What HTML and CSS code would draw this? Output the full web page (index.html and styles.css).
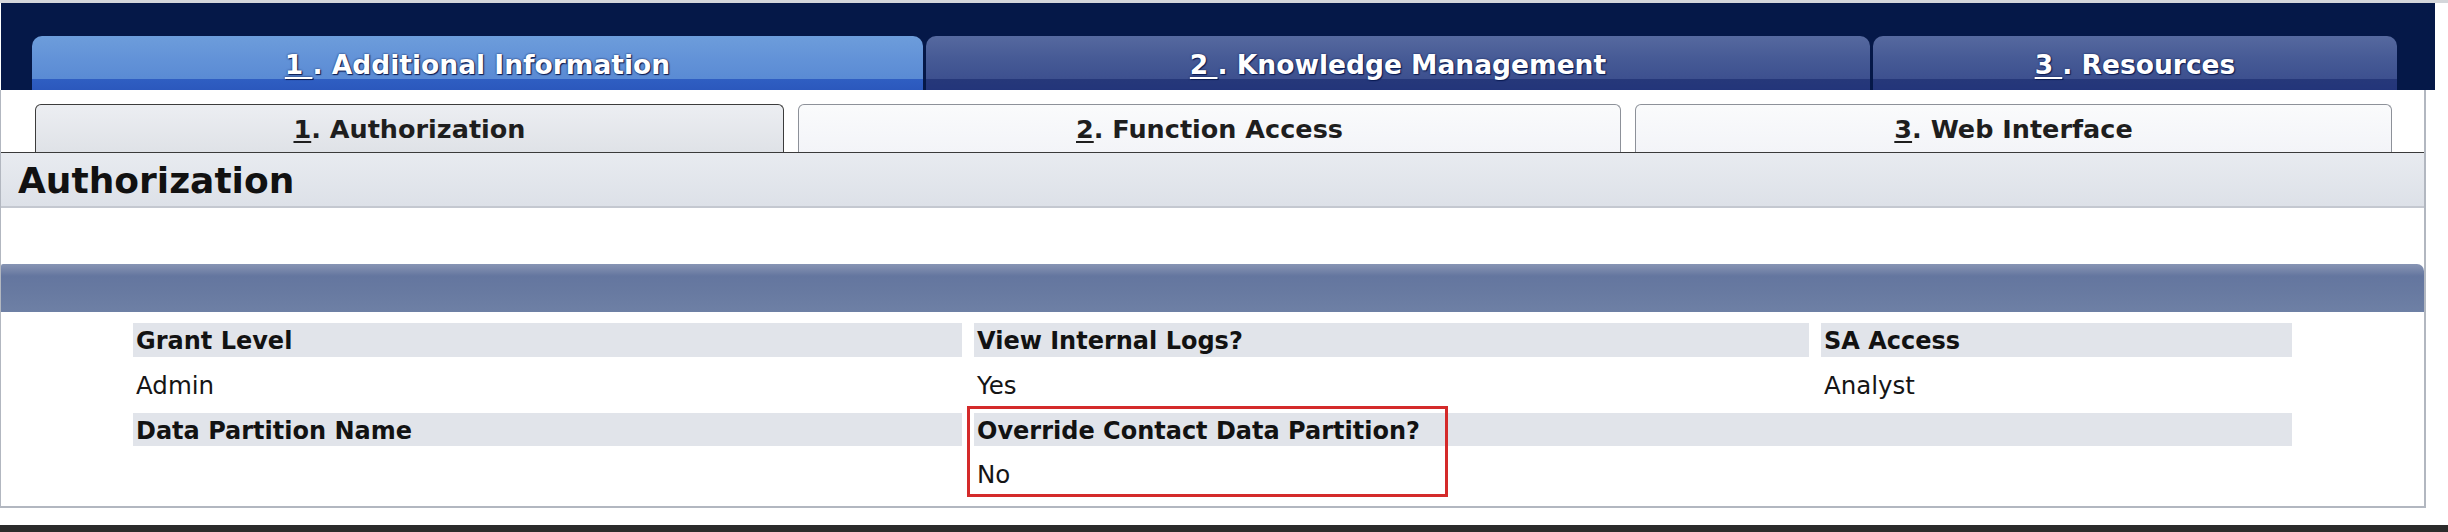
FILE: index.html
```html
<!DOCTYPE html>
<html>
<head>
<meta charset="utf-8">
<title>Authorization</title>
<link rel="stylesheet" href="styles.css">
</head>
<body>
<div class="screen">
  <div class="topnav">
    <div class="maintab active"><span class="u">1 </span>. Additional Information</div>
    <div class="maintab"><span class="u">2 </span>. Knowledge Management</div>
    <div class="maintab last"><span class="u">3 </span>. Resources</div>
  </div>
  <div class="panel">
    <div class="subtabs">
      <div class="subtab active s1"><span class="u">1</span>. Authorization</div>
      <div class="subtab s2"><span class="u">2</span>. Function Access</div>
      <div class="subtab s3"><span class="u">3</span>. Web Interface</div>
    </div>
    <div class="pagehead">Authorization</div>
    <div class="sectionbar"></div>
    <div class="fields">
      <div class="label">Grant Level</div>
      <div class="label">View Internal Logs?</div>
      <div class="label">SA Access</div>
      <div class="value">Admin</div>
      <div class="value">Yes</div>
      <div class="value">Analyst</div>
      <div class="label">Data Partition Name</div>
      <div class="label wide">Override Contact Data Partition?</div>
      <div class="value"></div>
      <div class="value">No</div>
      <div class="value"></div>
      <div class="highlight"></div>
    </div>
  </div>
  <div class="footer"></div>
</div>
</body>
</html>
```

FILE: styles.css
```css
* { box-sizing: border-box; margin: 0; padding: 0; }
html, body { width: 2448px; height: 532px; overflow: hidden; background: #ffffff; }
body { font-family: "DejaVu Sans", Verdana, sans-serif; color: #111111; }

.screen {
  width: 2448px;
  height: 532px;
  display: flex;
  flex-direction: column;
  border-top: 3px solid #d4d6da;
}

.u { text-decoration: underline; text-underline-offset: 3px; text-decoration-thickness: 2px; }

/* main tabs */
.topnav {
  width: 2434px;
  height: 87px;
  margin-left: 1px;
  background: #051848;
  padding: 33px 0 0 31px;
  display: flex;
  gap: 3px;
  flex-shrink: 0;
}
.maintab {
  width: 944px;
  height: 54px;
  border-radius: 10px 10px 0 0;
  color: #ffffff;
  font-weight: bold;
  font-size: 26.5px;
  padding-top: 3px;
  display: flex;
  align-items: center;
  justify-content: center;
  white-space: pre;
  text-shadow: 0 0 2px #0a1b52, 1px 1px 1px #0a1b52;
  background: linear-gradient(#56699f 0%, #475b96 40%, #3d508f 79%, #26387a 80%, #23357a 100%);
}
.maintab.active {
  width: 891px;
  background: linear-gradient(#6d9ddb 0%, #6393d8 40%, #5a8bd4 79%, #2f5ec2 80%, #2b58bd 100%);
}
.maintab.last { width: 524px; }

/* panel */
.panel {
  width: 2426px;
  height: 418px;
  border-left: 1px solid #b2b7c0;
  border-right: 2px solid #b2b7c0;
  border-bottom: 2px solid #b2b7c0;
  flex-shrink: 0;
}

.subtabs {
  height: 63px;
  padding: 14px 0 0 34px;
  display: flex;
  gap: 14px;
  border-bottom: 1px solid #3a3a3a;
}
.subtab {
  height: 48px;
  border: 1px solid #8d9199;
  border-bottom: none;
  border-radius: 6px 6px 0 0;
  background: linear-gradient(#fafbfc, #f3f4f8);
  display: flex;
  align-items: center;
  justify-content: center;
  font-size: 25.5px;
  font-weight: bold;
  color: #1e1e1e;
}
.subtab.active {
  border-color: #3c3c3c;
  background: linear-gradient(#eceef2, #dfe2e7);
}
.s1 { width: 749px; }
.s2 { width: 823px; }
.s3 { width: 757px; }

.pagehead {
  height: 55px;
  padding: 2px 0 0 17px;
  line-height: 51px;
  font-size: 36px;
  font-weight: bold;
  color: #111111;
  background: linear-gradient(#e8ebf0, #dde1e8);
  border-bottom: 2px solid #c4c8d0;
}

.sectionbar {
  margin-top: 56px;
  height: 48px;
  border-radius: 2px 7px 0 0;
  background: linear-gradient(#8795b4 0px, #7d8bad 4px, #64769f 12px, #687aa1 60%, #6e80a5 100%);
}

.fields {
  position: relative;
  margin: 11px 0 0 132px;
  display: grid;
  grid-template-columns: 829px 835px 471px;
  grid-template-rows: 34px 56px 33px 51px;
  column-gap: 12px;
}
.label {
  background: #e1e4ea;
  font-weight: bold;
  font-size: 24px;
  line-height: 34px;
  padding: 1px 0 0 3px;
  color: #121212;
  white-space: nowrap;
}
.label.wide { grid-column: span 2; }
.value {
  font-size: 24.5px;
  line-height: 30px;
  padding: 14px 0 0 3px;
  color: #151515;
}

.highlight {
  position: absolute;
  left: 834px;
  top: 83px;
  width: 481px;
  height: 91px;
  border: 3px solid #d42a2a;
}

.footer {
  margin-top: auto;
  height: 7px;
  background: #2b2b2b;
  flex-shrink: 0;
}
```
